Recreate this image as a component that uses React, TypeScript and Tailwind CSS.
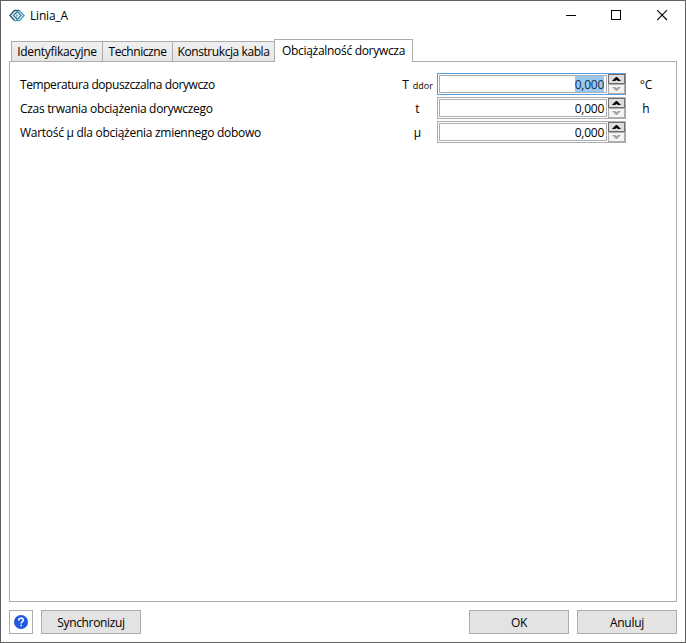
import React from "react";

const rows = [
  { label: "Temperatura dopuszczalna dorywczo", spacing: "tracking-[-0.42px]", symbol: "T", sub: "ddor", unit: "°C", active: true },
  { label: "Czas trwania obciążenia dorywczego", spacing: "tracking-[-0.31px]", symbol: "t", sub: "", unit: "h", active: false },
  { label: "Wartość µ dla obciążenia zmiennego dobowo", spacing: "tracking-[-0.28px]", symbol: "µ", sub: "", unit: "", active: false },
];

const inactiveTabs = [
  { label: "Identyfikacyjne", style: "w-[92px] tracking-[-0.3px]" },
  { label: "Techniczne", style: "w-[71px] tracking-[-0.42px]" },
  { label: "Konstrukcja kabla", style: "w-[103px] tracking-[-0.42px]" },
];

function AppLogo() {
  return (
    <svg width="16" height="14" viewBox="0 0 16 14" fill="none" strokeWidth="1.4">
      <path d="M10 1.5H5.5L1 6.5l4.5 5" stroke="#24556c" />
      <path d="M10 1.5 15 6.5l-4.5 5h-5" stroke="#4c9dba" />
      <path d="M8.5 2.5 4.5 6.5l4 4" stroke="#2f718b" />
      <path d="m9 3 3 3.5-4 4" stroke="#3a829d" />
      <path d="M8.8 4.8 7.2 6.4h1.6L7.2 8.4" stroke="#4c9dba" strokeWidth="1" />
    </svg>
  );
}

function TitleBar() {
  return (
    <header className="flex h-[38px] shrink-0 items-start justify-between">
      <div className="flex items-center pt-[6px] pl-[8px]">
        <AppLogo />
        <span className="ml-[5px] h-[18px] leading-[18px] tracking-[-0.2px]">Linia_A</span>
      </div>
      <div className="mt-[9px] mr-[17px] flex">
        <svg className="mr-[34px]" width="11" height="11"><path d="M0 5.5h10" stroke="#000" shapeRendering="crispEdges" /></svg>
        <svg className="mr-[35px]" width="11" height="11"><rect x=".5" y=".5" width="9" height="9" fill="none" stroke="#000" shapeRendering="crispEdges" /></svg>
        <svg width="11" height="11"><path d="m.2.2 9.8 9.8M10 .2.2 10" stroke="#000" strokeWidth="1.1" /></svg>
      </div>
    </header>
  );
}

function Spinner() {
  return (
    <div className="flex w-[17px] flex-col">
      <div className="flex h-[10px] items-center justify-center border border-[#707070] bg-[#dddddd]">
        <svg width="9" height="4"><path d="M0 4 4 0h1l4 4H6L4.5 3 3 4z" fill="#000" /></svg>
      </div>
      <div className="flex h-[10px] items-center justify-center border border-[#acacac] bg-[#f4f4f4]">
        <svg width="9" height="4"><path d="m0 0 4 4h1l4-4H6L4.5 1 3 0z" fill="#a6a6a6" /></svg>
      </div>
    </div>
  );
}

function NumberField({ active }: { active: boolean }) {
  return (
    <div className={"flex h-[22px] w-[189px] border " + (active ? "border-[#569de5]" : "border-[#abadb3]")}>
      <div className="mt-px mr-px ml-px flex h-[18px] w-[168px] items-center justify-end border border-[#abadb3] pr-[2px]">
        <span className={"h-4 pt-px leading-[15px] tracking-[-0.25px] " + (active ? "bg-[#99c9ef] text-[#17304d]" : "")}>0,000</span>
      </div>
      <Spinner />
    </div>
  );
}

function Button({ children, className }: { children: React.ReactNode; className: string }) {
  return (
    <button className={"flex h-6 items-center justify-center border border-[#adadad] bg-[#e3e3e3] pt-[2px] leading-4 " + className}>
      {children}
    </button>
  );
}

export default function App() {
  return (
    <div className="flex h-[643px] w-[686px] flex-col border border-[#5f6068] bg-white font-['Open_Sans','Noto_Sans',sans-serif] text-[12px] text-black">
      <TitleBar />
      <nav className="flex h-[23px] shrink-0 items-end pl-[10px]">
        {inactiveTabs.map((tab) => (
          <div key={tab.label} className={"-mr-px flex h-[21px] items-center justify-center border border-[#acacac] bg-linear-to-b from-[#f0f0f0] to-[#e5e5e5] whitespace-nowrap " + tab.style}>
            {tab.label}
          </div>
        ))}
        <div className="relative flex h-[23px] w-[139px] items-center justify-center border border-b-0 border-[#acacac] bg-white whitespace-nowrap tracking-[-0.3px]">
          Obciążalność dorywcza
        </div>
      </nav>
      <main className="mx-[8px] -mt-px flex h-[541px] w-[668px] shrink-0 flex-col gap-[2px] border border-[#acacac] pt-[11px]">
        {rows.map((row) => (
          <div key={row.label} className="flex h-[22px] items-center">
            <span className={"w-[377px] pt-[2px] pl-[10px] whitespace-nowrap " + row.spacing}>{row.label}</span>
            <span className="flex w-[50px] items-baseline justify-center gap-[4px] pt-[2px] pl-[11px] whitespace-nowrap">
              {row.symbol}
              {row.sub && <span className="text-[9px]">{row.sub}</span>}
            </span>
            <NumberField active={row.active} />
            <span className="w-10 pt-[2px] text-center">{row.unit}</span>
          </div>
        ))}
      </main>
      <footer className="flex px-[8px] pt-[8px]">
        <button className="flex size-6 items-center justify-center border border-[#adadad] bg-white">
          <svg width="14" height="14" viewBox="0 0 14 14" fill="none">
            <circle cx="7" cy="7" r="7" fill="#2058e0" />
            <path d="M4.7 5.4C4.7 2.5 9.4 2.5 9.4 5c0 1.7-2.2 1.6-2.2 3.4" stroke="#fff" strokeWidth="1.6" />
            <path d="M6.4 9.8H8v1.5H6.4z" fill="#fff" />
          </svg>
        </button>
        <Button className="ml-2 w-[100px] tracking-[-0.35px]">Synchronizuj</Button>
        <Button className="ml-auto w-[100px] tracking-[-0.25px]">OK</Button>
        <Button className="ml-2 w-[100px] tracking-[-0.25px]">Anuluj</Button>
      </footer>
    </div>
  );
}
